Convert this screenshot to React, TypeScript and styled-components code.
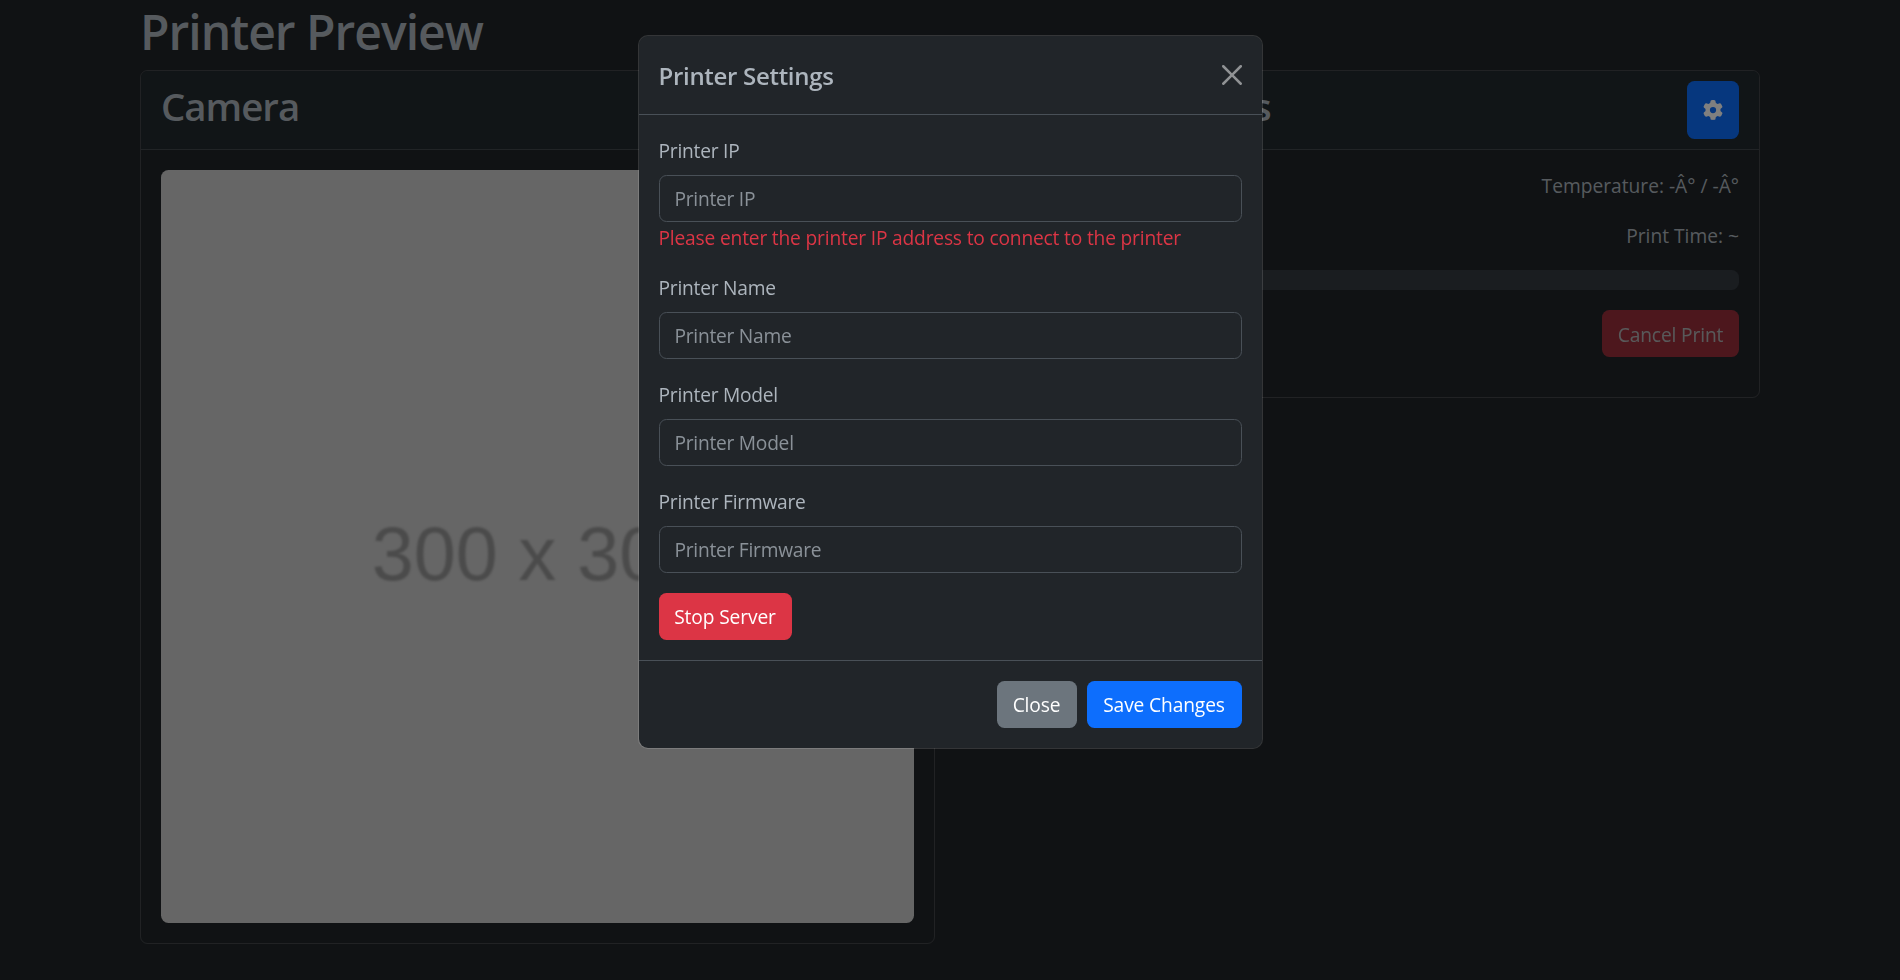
import React from 'react';
import styled, { createGlobalStyle } from 'styled-components';
import { FaGear } from 'react-icons/fa6';

const GlobalStyle = createGlobalStyle`
  *, *::before, *::after { box-sizing: border-box; }
  html, body { height: 100%; overflow: hidden; }
  body {
    margin: 0;
    background: #212529;
    color: #adb5bd;
    font-family: "Open Sans", "Noto Sans", sans-serif;
    font-size: 19.2px;
    line-height: 30px;
    letter-spacing: -0.18px;
  }
`;

const Container = styled.main`
  width: 1650px;
  margin: 0 auto;
  padding: 0 15px;
`;

const PageTitle = styled.h1`
  margin: 0 0 10px;
  padding-top: 4px;
  font-size: 48px;
  font-weight: 600;
  line-height: 56px;
  letter-spacing: -0.98px;
`;

const Columns = styled.div`
  display: grid;
  grid-template-columns: 1fr 1fr;
  gap: 30px;
  align-items: start;
`;

const Card = styled.section`
  border: 1px solid rgba(255, 255, 255, 0.15);
  border-radius: 7.5px;
  overflow: hidden;
`;

const CardHeader = styled.header`
  display: flex;
  justify-content: space-between;
  align-items: flex-start;
  height: 79px;
  padding: 10px 20px;
  background: #222a2e;
  border-bottom: 1px solid rgba(255, 255, 255, 0.15);
`;

const CardTitle = styled.h2<{ $tracking: number }>`
  margin: 0;
  padding-top: 2px;
  font-size: 38.4px;
  font-weight: 600;
  line-height: 46px;
  letter-spacing: ${p => p.$tracking}px;
`;

const CardBody = styled.div`
  padding: 20px;
`;

const CameraFeed = styled.div`
  display: flex;
  align-items: center;
  justify-content: center;
  aspect-ratio: 1;
  padding-top: 17px;
  border-radius: 7.5px;
  background: #ccc;
  color: #969696;
  font: 75.5px/1 "Liberation Sans", Arial, sans-serif;
  letter-spacing: 0;

  span { filter: blur(1px); }
`;

const StatusBody = styled(CardBody)`
  display: flex;
  flex-direction: column;
  align-items: flex-end;
  gap: 20px;
  padding-bottom: 40px;
`;

const StatusLine = styled.p`
  margin: 0;
  padding-top: 2px;
  line-height: 28px;
  letter-spacing: 0;
`;

const ProgressTrack = styled.div`
  width: 100%;
  height: 20px;
  border-radius: 7.5px;
  background: #343a40;
`;

const tones = { primary: '#0d6efd', secondary: '#6c757d', danger: '#dc3545' };

const Button = styled.button<{ $tone: keyof typeof tones; $width: number }>`
  width: ${p => p.$width}px;
  height: 47px;
  padding: 0;
  border: 0;
  border-radius: 7.5px;
  background: ${p => tones[p.$tone]};
  color: #fff;
  font: inherit;
  letter-spacing: -0.13px;
  white-space: nowrap;

  &:disabled { padding-top: 2px; opacity: 0.65; }
`;

const SettingsButton = styled(Button)`
  display: flex;
  align-items: center;
  justify-content: center;
  height: 58px;
  font-size: 20px;
`;

const Backdrop = styled.div`
  position: fixed;
  inset: 0;
  display: flex;
  justify-content: center;
  align-items: flex-start;
  padding-top: 35px;
  background: rgba(0, 0, 0, 0.5);
`;

const Dialog = styled.div`
  width: 625px;
  border: 1px solid rgba(255, 255, 255, 0.15);
  border-radius: 10px;
  background: #212529;
  background-clip: padding-box;
`;

const DialogHeader = styled.header`
  display: flex;
  justify-content: space-between;
  align-items: center;
  height: 79px;
  padding: 0 20px;
  border-bottom: 1px solid #495057;
`;

const DialogTitle = styled.h5`
  margin: 0;
  font-size: 24px;
  font-weight: 600;
  line-height: 37px;
  letter-spacing: -0.3px;
`;

const CloseIconButton = styled.button`
  display: flex;
  padding: 0;
  border: 0;
  background: none;
  color: #fff;
  opacity: 0.5;
`;

const Form = styled.form`
  display: flex;
  flex-direction: column;
  align-items: stretch;
  gap: 20px;
  padding: 20px;
`;

const Field = styled.div`
  display: flex;
  flex-direction: column;
`;

const Label = styled.label`
  margin-bottom: 10px;
  padding-top: 2px;
  line-height: 28px;
  letter-spacing: -0.24px;
`;

const Input = styled.input`
  height: 47px;
  padding: 0 15px;
  border: 1px solid #495057;
  border-radius: 7.5px;
  background: #212529;
  color: #adb5bd;
  font: inherit;
  letter-spacing: -0.26px;
  outline: none;

  &::placeholder { color: rgba(173, 181, 189, 0.75); opacity: 1; }
`;

const ErrorText = styled.span`
  padding-top: 2px;
  line-height: 28px;
  color: #dc3545;
`;

const DialogFooter = styled.footer`
  display: flex;
  justify-content: flex-end;
  gap: 10px;
  padding: 20px;
  border-top: 1px solid #495057;
`;

const fields = [
  { id: 'ip', name: 'Printer IP', error: 'Please enter the printer IP address to connect to the printer' },
  { id: 'name', name: 'Printer Name' },
  { id: 'model', name: 'Printer Model' },
  { id: 'firmware', name: 'Printer Firmware' },
];

function SettingsDialog() {
  return (
    <Backdrop>
      <Dialog role="dialog" aria-labelledby="settings-title">
        <DialogHeader>
          <DialogTitle id="settings-title">Printer Settings</DialogTitle>
          <CloseIconButton aria-label="Close">
            <svg width="20" height="20" viewBox="0 0 16 16" fill="currentColor">
              <path d="M.293.293a1 1 0 0 1 1.414 0L8 6.586 14.293.293a1 1 0 1 1 1.414 1.414L9.414 8l6.293 6.293a1 1 0 0 1-1.414 1.414L8 9.414l-6.293 6.293a1 1 0 0 1-1.414-1.414L6.586 8 .293 1.707a1 1 0 0 1 0-1.414z" />
            </svg>
          </CloseIconButton>
        </DialogHeader>
        <Form>
          {fields.map(f => (
            <Field key={f.id}>
              <Label htmlFor={f.id}>{f.name}</Label>
              <Input id={f.id} placeholder={f.name} />
              {f.error && <ErrorText>{f.error}</ErrorText>}
            </Field>
          ))}
          <Button type="button" $tone="danger" $width={133}>Stop Server</Button>
        </Form>
        <DialogFooter>
          <Button $tone="secondary" $width={80}>Close</Button>
          <Button $tone="primary" $width={155}>Save Changes</Button>
        </DialogFooter>
      </Dialog>
    </Backdrop>
  );
}

export default function App() {
  return (
    <>
      <GlobalStyle />
      <Container>
        <PageTitle>Printer Preview</PageTitle>
        <Columns>
          <Card>
            <CardHeader>
              <CardTitle $tracking={-1}>Camera</CardTitle>
            </CardHeader>
            <CardBody>
              <CameraFeed><span>300 x 300</span></CameraFeed>
            </CardBody>
          </Card>
          <Card>
            <CardHeader>
              <CardTitle $tracking={-0.68}>Printer Controls</CardTitle>
              <SettingsButton $tone="primary" $width={52} aria-label="Settings">
                <FaGear />
              </SettingsButton>
            </CardHeader>
            <StatusBody>
              <StatusLine>Temperature: -Â° / -Â°</StatusLine>
              <StatusLine>Print Time: ~</StatusLine>
              <ProgressTrack />
              <Button $tone="danger" $width={137} disabled>Cancel Print</Button>
            </StatusBody>
          </Card>
        </Columns>
      </Container>
      <SettingsDialog />
    </>
  );
}
